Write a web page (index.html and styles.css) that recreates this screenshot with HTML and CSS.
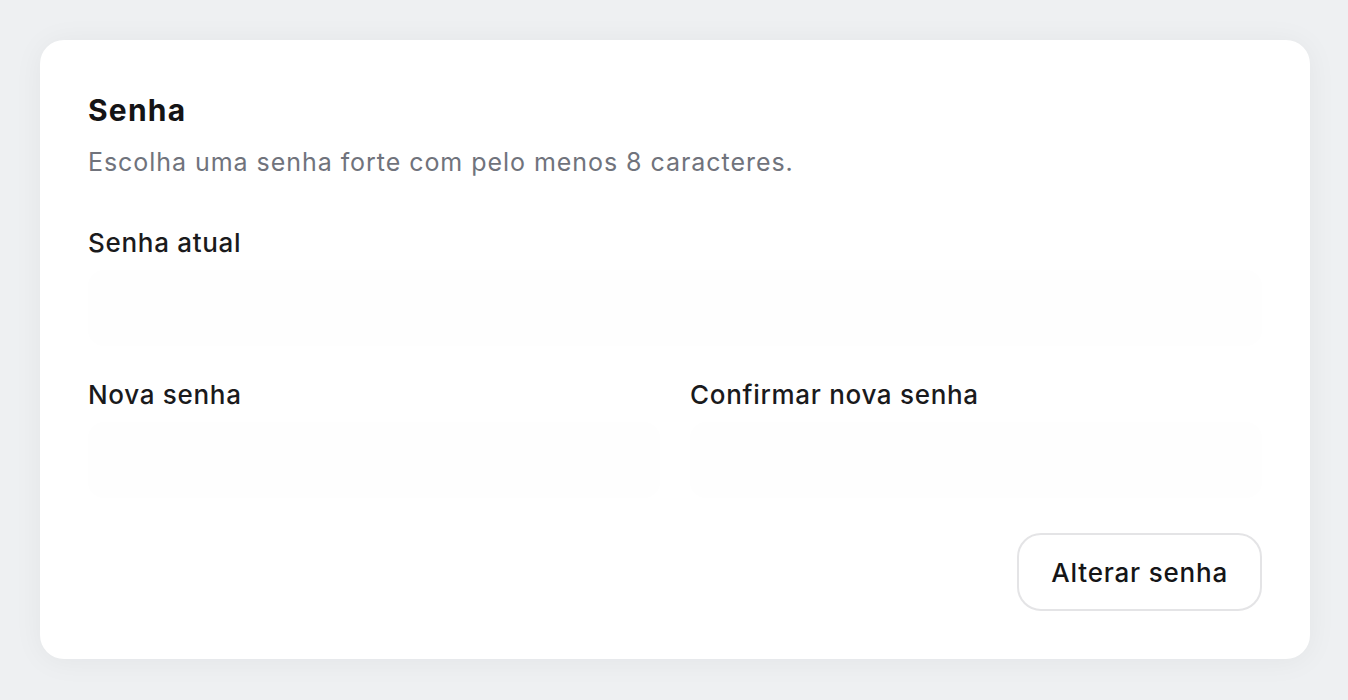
FILE: index.html
```html
<!DOCTYPE html>
<html lang="pt-BR">
<head>
<meta charset="utf-8">
<title>Senha</title>
<link rel="stylesheet" href="styles.css">
</head>
<body>
<main class="page">
  <section class="card">
    <header class="card-head">
      <h2 class="title">Senha</h2>
      <p class="subtitle">Escolha uma senha forte com pelo menos 8 caracteres.</p>
    </header>
    <form class="form">
      <div class="field">
        <label class="label" for="atual">Senha atual</label>
        <input class="input" id="atual" type="password">
      </div>
      <div class="row">
        <div class="field">
          <label class="label" for="nova">Nova senha</label>
          <input class="input" id="nova" type="password">
        </div>
        <div class="field">
          <label class="label" for="confirmar">Confirmar nova senha</label>
          <input class="input" id="confirmar" type="password">
        </div>
      </div>
      <div class="actions">
        <button class="btn" type="button">Alterar senha</button>
      </div>
    </form>
  </section>
</main>
</body>
</html>
```

FILE: styles.css
```css
* { box-sizing: border-box; }
html, body { margin: 0; padding: 0; }
body {
  background: #eef0f2;
  font-family: Inter, "Noto Sans", "Liberation Sans", sans-serif;
  color: #18181b;
}
.page {
  padding: 40px 38px 40px 40px;
}
.card {
  background: #ffffff;
  border-radius: 24px;
  padding: 48px;
  box-shadow: 0 2px 30px rgba(20, 24, 32, 0.05);
}
.card-head { margin-bottom: 43px; }
.title {
  margin: 0;
  font-size: 30px;
  line-height: 45px;
  font-weight: 700;
  letter-spacing: 1.2px;
  color: #141416;
}
.subtitle {
  margin: 11px 0 0;
  font-size: 25px;
  line-height: 36px;
  letter-spacing: 0.95px;
  color: #70737c;
}
.form {
  display: flex;
  flex-direction: column;
  gap: 29px;
}
.row {
  display: grid;
  grid-template-columns: 1fr 1fr;
  gap: 30px;
}
.field {
  display: flex;
  flex-direction: column;
  gap: 8px;
}
.label {
  font-size: 26px;
  line-height: 39px;
  font-weight: 500;
  letter-spacing: 0.7px;
  color: #1a1a1c;
}
.input {
  height: 76px;
  border: none;
  border-radius: 16px;
  background: #fefefe;
  font: inherit;
  outline: none;
}
.actions {
  display: flex;
  justify-content: flex-end;
  margin-top: 6px;
}
.btn {
  height: 78px;
  padding: 0 32px;
  border: 2px solid #e4e4e6;
  border-radius: 24px;
  background: #ffffff;
  font-family: inherit;
  font-size: 26px;
  font-weight: 500;
  letter-spacing: 0.8px;
  color: #151517;
}
```
